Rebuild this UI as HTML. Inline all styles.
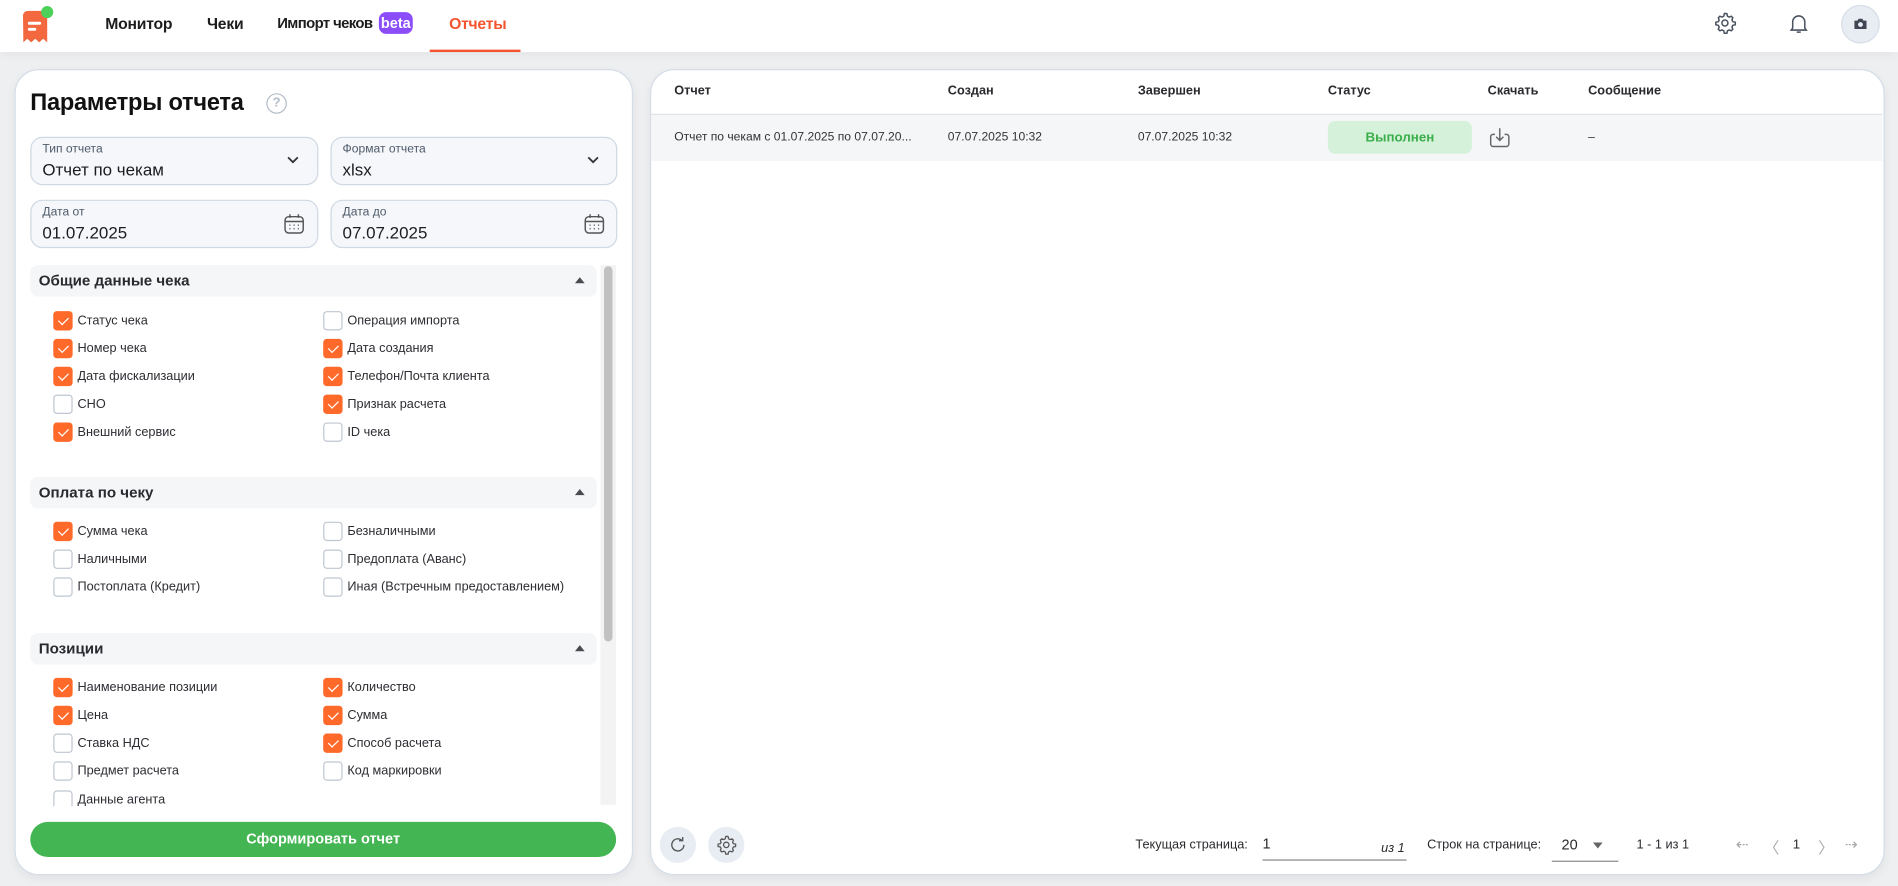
<!DOCTYPE html>
<html><head><meta charset="utf-8">
<style>
html,body{margin:0;padding:0;width:1898px;height:886px;overflow:hidden;background:#eeeff1;font-family:"Liberation Sans",Arial,sans-serif;color:#1d1d1f}
#w{position:absolute;left:0;top:0;width:1568px;height:732px;transform:scale(1.21046);transform-origin:0 0}
.a{position:absolute}
.nav{left:0;top:0;width:1568px;height:43px;background:#fff;box-shadow:0 2px 8px rgba(0,0,0,.06)}
.ni{position:absolute;top:12px;font-size:13px;font-weight:600;color:#1d1d1f;letter-spacing:-.2px}
.panel{background:#fff;border:1px solid #d5dde8;border-radius:20px;box-shadow:0 3px 8px rgba(0,0,0,.06)}
.fld{position:absolute;background:#f5f7fa;border:1px solid #cfd8e3;border-radius:10px;height:38px}
.fld .l{position:absolute;left:9px;top:4px;font-size:10px;color:#4f5b6b}
.fld .v{position:absolute;left:9px;top:18px;font-size:14px;color:#1d1d1f}
.sec{position:absolute;left:25px;width:468px;height:26px;background:#f5f6f8;border-radius:6px}
.sec span{position:absolute;left:7px;top:6px;font-size:12.5px;font-weight:700;color:#2a2a2e}
.sec i{position:absolute;left:450px;top:10px;width:0;height:0;border-left:4px solid transparent;border-right:4px solid transparent;border-bottom:5px solid #4a4a4f}
.cb{position:absolute;width:14px;height:14px;border:1px solid #bfc6d1;border-radius:3px;background:#fff}
.cb.on{background:#ff6a2b;border-color:#ff6a2b}
.cb.on:after{content:"";position:absolute;left:4.5px;top:1.5px;width:3.5px;height:7px;border:solid #fff;border-width:0 1.8px 1.8px 0;transform:rotate(45deg)}
.lb{position:absolute;font-size:10.5px;color:#2d2d33;margin-top:2px}
.th{position:absolute;top:69px;font-size:10.5px;font-weight:700;color:#2a2a2e}
.td{position:absolute;top:108px;font-size:10px;color:#333}
.ft{position:absolute;font-size:10.5px;color:#2a2a2e}
.rb{position:absolute;width:30px;height:30px;border-radius:15px;background:#e8edf3}
</style></head><body><div id="w">
<div class="a nav">
  <svg class="a" style="left:16px;top:3px" width="32" height="34" viewBox="0 0 32 34">
    <path d="M3 10 a4 4 0 0 1 4-4 h12 a4 4 0 0 1 4 4 v22 l-3.3-3-3.3 3-3.3-3-3.3 3-3.3-3-3.2 3z" fill="#f4683f"/>
    <rect x="7" y="15" width="11" height="2.4" rx="1.2" fill="#fff"/><rect x="7" y="20" width="7" height="2.4" rx="1.2" fill="#fff"/>
    <circle cx="23" cy="7" r="5" fill="#4cd05a"/>
  </svg>
  <div class="ni" style="left:87px">Монитор</div>
  <div class="ni" style="left:171px">Чеки</div>
  <div class="ni" style="left:229px;white-space:nowrap;font-size:12.3px;letter-spacing:-.5px">Импорт чеков</div>
  <div class="a" style="left:313px;top:10px;width:28px;height:18px;border-radius:6px;background:#8b4dfa;color:#fff;font-size:12px;text-align:center;line-height:18px;font-weight:600">beta</div>
  <div class="ni" style="left:371px;color:#f4552f">Отчеты</div>
  <div class="a" style="left:355px;top:41px;width:75px;height:2px;background:#f4552f"></div>
  <svg class="a" style="left:1415px;top:9px" width="20" height="20" viewBox="0 0 24 24" fill="none" stroke="#4a5260" stroke-width="1.5"><circle cx="12" cy="12" r="3"/><path d="M12 2.5l2 .3.5 2.4 1.6.9 2.3-.8 1.4 1.5-.8 2.3.9 1.6 2.4.5v2.6l-2.4.5-.9 1.6.8 2.3-1.4 1.5-2.3-.8-1.6.9-.5 2.4h-2.6l-.5-2.4-1.6-.9-2.3.8-1.5-1.5.8-2.3-.9-1.6-2.4-.5v-2.6l2.4-.5.9-1.6-.8-2.3 1.5-1.5 2.3.8 1.6-.9.5-2.4z"/></svg>
  <svg class="a" style="left:1476px;top:9px" width="20" height="20" viewBox="0 0 24 24" fill="none" stroke="#4a5260" stroke-width="1.5"><path d="M6 17V11a6 6 0 0 1 12 0v6l1.5 2h-15z"/><path d="M10 21h4"/></svg>
  <div class="a" style="left:1521px;top:4px;width:32px;height:32px;border-radius:16px;background:#e8edf3;border:1px solid #d5dde8;box-sizing:border-box"></div>
  <svg class="a" style="left:1531px;top:14px" width="12" height="11" viewBox="0 0 12 11"><path d="M1 3h2.5l1-1.5h3l1 1.5H11v7H1z" fill="#3e4654"/><circle cx="6" cy="6.3" r="2" fill="#e8edf3"/></svg>
</div>

<div class="a panel" style="left:12px;top:57px;width:509px;height:664px"></div>
<div class="a" style="left:25px;top:74px;font-size:19.5px;font-weight:700;color:#111;letter-spacing:-.2px">Параметры отчета</div>
<div class="a" style="left:220px;top:77px;width:15px;height:15px;border:1.5px solid #b3bcc8;border-radius:50%;color:#b3bcc8;font-size:11px;text-align:center;line-height:15px;font-weight:700">?</div>
<div class="fld" style="left:25px;top:113px;width:236px"><div class="l">Тип отчета</div><div class="v">Отчет по чекам</div></div>
<div class="fld" style="left:273px;top:113px;width:235px"><div class="l">Формат отчета</div><div class="v">xlsx</div></div>
<div class="fld" style="left:25px;top:165px;width:236px"><div class="l">Дата от</div><div class="v">01.07.2025</div></div>
<div class="fld" style="left:273px;top:165px;width:235px"><div class="l">Дата до</div><div class="v">07.07.2025</div></div>
<svg class="a" style="left:236px;top:128px" width="12" height="8" viewBox="0 0 12 8" fill="none" stroke="#333" stroke-width="1.5"><path d="M2 2l4 4 4-4"/></svg>
<svg class="a" style="left:484px;top:128px" width="12" height="8" viewBox="0 0 12 8" fill="none" stroke="#333" stroke-width="1.5"><path d="M2 2l4 4 4-4"/></svg>
<svg class="a" style="left:234px;top:176px" width="18" height="18" viewBox="0 0 18 18" fill="none" stroke="#555" stroke-width="1.2"><rect x="1.5" y="3" width="15" height="13.5" rx="3"/><path d="M1.5 7h15M5.5 1v3M12.5 1v3"/><path d="M5 10h1M8.5 10h1M12 10h1M5 13h1M8.5 13h1M12 13h1" stroke-width="1"/></svg>
<svg class="a" style="left:482px;top:176px" width="18" height="18" viewBox="0 0 18 18" fill="none" stroke="#555" stroke-width="1.2"><rect x="1.5" y="3" width="15" height="13.5" rx="3"/><path d="M1.5 7h15M5.5 1v3M12.5 1v3"/><path d="M5 10h1M8.5 10h1M12 10h1M5 13h1M8.5 13h1M12 13h1" stroke-width="1"/></svg>

<div class="a" style="left:496px;top:219px;width:13px;height:446px;background:#f3f3f3"></div>
<div class="a" style="left:499px;top:220px;width:7px;height:310px;background:#c1c1c1;border-radius:4px"></div>

<div class="sec" style="top:219px"><span>Общие данные чека</span><i></i></div>
<div class="cb on" style="left:44px;top:257px"></div><div class="lb" style="left:64px;top:257px">Статус чека</div>
<div class="cb" style="left:267px;top:257px"></div><div class="lb" style="left:287px;top:257px">Операция импорта</div>
<div class="cb on" style="left:44px;top:280px"></div><div class="lb" style="left:64px;top:280px">Номер чека</div>
<div class="cb on" style="left:267px;top:280px"></div><div class="lb" style="left:287px;top:280px">Дата создания</div>
<div class="cb on" style="left:44px;top:303px"></div><div class="lb" style="left:64px;top:303px">Дата фискализации</div>
<div class="cb on" style="left:267px;top:303px"></div><div class="lb" style="left:287px;top:303px">Телефон/Почта клиента</div>
<div class="cb" style="left:44px;top:326px"></div><div class="lb" style="left:64px;top:326px">СНО</div>
<div class="cb on" style="left:267px;top:326px"></div><div class="lb" style="left:287px;top:326px">Признак расчета</div>
<div class="cb on" style="left:44px;top:349px"></div><div class="lb" style="left:64px;top:349px">Внешний сервис</div>
<div class="cb" style="left:267px;top:349px"></div><div class="lb" style="left:287px;top:349px">ID чека</div>

<div class="sec" style="top:394px"><span>Оплата по чеку</span><i></i></div>
<div class="cb on" style="left:44px;top:431px"></div><div class="lb" style="left:64px;top:431px">Сумма чека</div>
<div class="cb" style="left:267px;top:431px"></div><div class="lb" style="left:287px;top:431px">Безналичными</div>
<div class="cb" style="left:44px;top:454px"></div><div class="lb" style="left:64px;top:454px">Наличными</div>
<div class="cb" style="left:267px;top:454px"></div><div class="lb" style="left:287px;top:454px">Предоплата (Аванс)</div>
<div class="cb" style="left:44px;top:477px"></div><div class="lb" style="left:64px;top:477px">Постоплата (Кредит)</div>
<div class="cb" style="left:267px;top:477px"></div><div class="lb" style="left:287px;top:477px">Иная (Встречным предоставлением)</div>

<div class="sec" style="top:523px"><span>Позиции</span><i></i></div>
<div class="cb on" style="left:44px;top:560px"></div><div class="lb" style="left:64px;top:560px">Наименование позиции</div>
<div class="cb on" style="left:267px;top:560px"></div><div class="lb" style="left:287px;top:560px">Количество</div>
<div class="cb on" style="left:44px;top:583px"></div><div class="lb" style="left:64px;top:583px">Цена</div>
<div class="cb on" style="left:267px;top:583px"></div><div class="lb" style="left:287px;top:583px">Сумма</div>
<div class="cb" style="left:44px;top:606px"></div><div class="lb" style="left:64px;top:606px">Ставка НДС</div>
<div class="cb on" style="left:267px;top:606px"></div><div class="lb" style="left:287px;top:606px">Способ расчета</div>
<div class="cb" style="left:44px;top:629px"></div><div class="lb" style="left:64px;top:629px">Предмет расчета</div>
<div class="cb" style="left:267px;top:629px"></div><div class="lb" style="left:287px;top:629px">Код маркировки</div>
<div class="cb" style="left:44px;top:653px"></div><div class="lb" style="left:64px;top:653px">Данные агента</div>
<div class="a" style="left:20px;top:666px;width:476px;height:12px;background:#fff"></div>

<div class="a" style="left:25px;top:679px;width:484px;height:29px;border-radius:15px;background:#44b553;color:#fff;font-size:12px;font-weight:700;text-align:center;line-height:29px">Сформировать отчет</div>

<div class="a panel" style="left:537px;top:57px;width:1018px;height:664px"></div>
<div class="a" style="left:538px;top:94px;width:1017px;height:1px;background:#dfe3e8"></div>
<div class="th" style="left:557px">Отчет</div>
<div class="th" style="left:783px">Создан</div>
<div class="th" style="left:940px">Завершен</div>
<div class="th" style="left:1097px">Статус</div>
<div class="th" style="left:1229px">Скачать</div>
<div class="th" style="left:1312px">Сообщение</div>
<div class="a" style="left:538px;top:95px;width:1017px;height:38px;background:#f5f6f8"></div>
<div class="td" style="left:557px">Отчет по чекам с 01.07.2025 по 07.07.20...</div>
<div class="td" style="left:783px">07.07.2025 10:32</div>
<div class="td" style="left:940px">07.07.2025 10:32</div>
<div class="a" style="left:1097px;top:100px;width:119px;height:27px;border-radius:6px;background:#d5f1d9;color:#3aae4a;font-size:11px;font-weight:700;text-align:center;line-height:28px">Выполнен</div>
<svg class="a" style="left:1229px;top:104px" width="20" height="20" viewBox="0 0 20 20" fill="none" stroke="#666" stroke-width="1.2"><path d="M6 7H4.5a2 2 0 0 0-2 2v6a2 2 0 0 0 2 2h11a2 2 0 0 0 2-2V9a2 2 0 0 0-2-2H14"/><path d="M10 2v10M7 9l3 3 3-3"/></svg>
<div class="td" style="left:1312px">–</div>

<div class="rb" style="left:545px;top:683px"></div>
<svg class="a" style="left:552px;top:690px" width="16" height="16" viewBox="0 0 16 16" fill="none" stroke="#555" stroke-width="1.1"><path d="M13 8a5 5 0 1 1-1.5-3.6M12 1.5v3h-3"/></svg>
<div class="rb" style="left:585px;top:683px"></div>
<svg class="a" style="left:591px;top:689px" width="18" height="18" viewBox="0 0 24 24" fill="none" stroke="#555" stroke-width="1.4"><circle cx="12" cy="12" r="3"/><path d="M12 2.5l2 .3.5 2.4 1.6.9 2.3-.8 1.4 1.5-.8 2.3.9 1.6 2.4.5v2.6l-2.4.5-.9 1.6.8 2.3-1.4 1.5-2.3-.8-1.6.9-.5 2.4h-2.6l-.5-2.4-1.6-.9-2.3.8-1.5-1.5.8-2.3-.9-1.6-2.4-.5v-2.6l2.4-.5.9-1.6-.8-2.3 1.5-1.5 2.3.8 1.6-.9.5-2.4z"/></svg>
<div class="ft" style="left:938px;top:692px">Текущая страница:</div>
<div class="ft" style="left:1043px;top:690px;font-size:12px">1</div>
<div class="ft" style="left:1141px;top:695px;font-style:italic">из 1</div>
<div class="a" style="left:1043px;top:710px;width:119px;height:1px;background:#888"></div>
<div class="ft" style="left:1179px;top:692px">Строк на странице:</div>
<div class="ft" style="left:1290px;top:691px;font-size:12px">20</div>
<div class="a" style="left:1316px;top:696px;width:0;height:0;border-left:4px solid transparent;border-right:4px solid transparent;border-top:5px solid #666"></div>
<div class="a" style="left:1282px;top:711px;width:55px;height:1px;background:#888"></div>
<div class="ft" style="left:1352px;top:692px">1 - 1 из 1</div>
<div class="ft" style="left:1434px;top:690px;color:#aaa;font-size:13px">⇠</div>
<div class="ft" style="left:1457px;top:690px;color:#aaa;font-size:13px">〈</div>
<div class="ft" style="left:1481px;top:692px;font-size:11px">1</div>
<div class="ft" style="left:1502px;top:690px;color:#aaa;font-size:13px">〉</div>
<div class="ft" style="left:1524px;top:690px;color:#aaa;font-size:13px">⇢</div>
</div></body></html>
